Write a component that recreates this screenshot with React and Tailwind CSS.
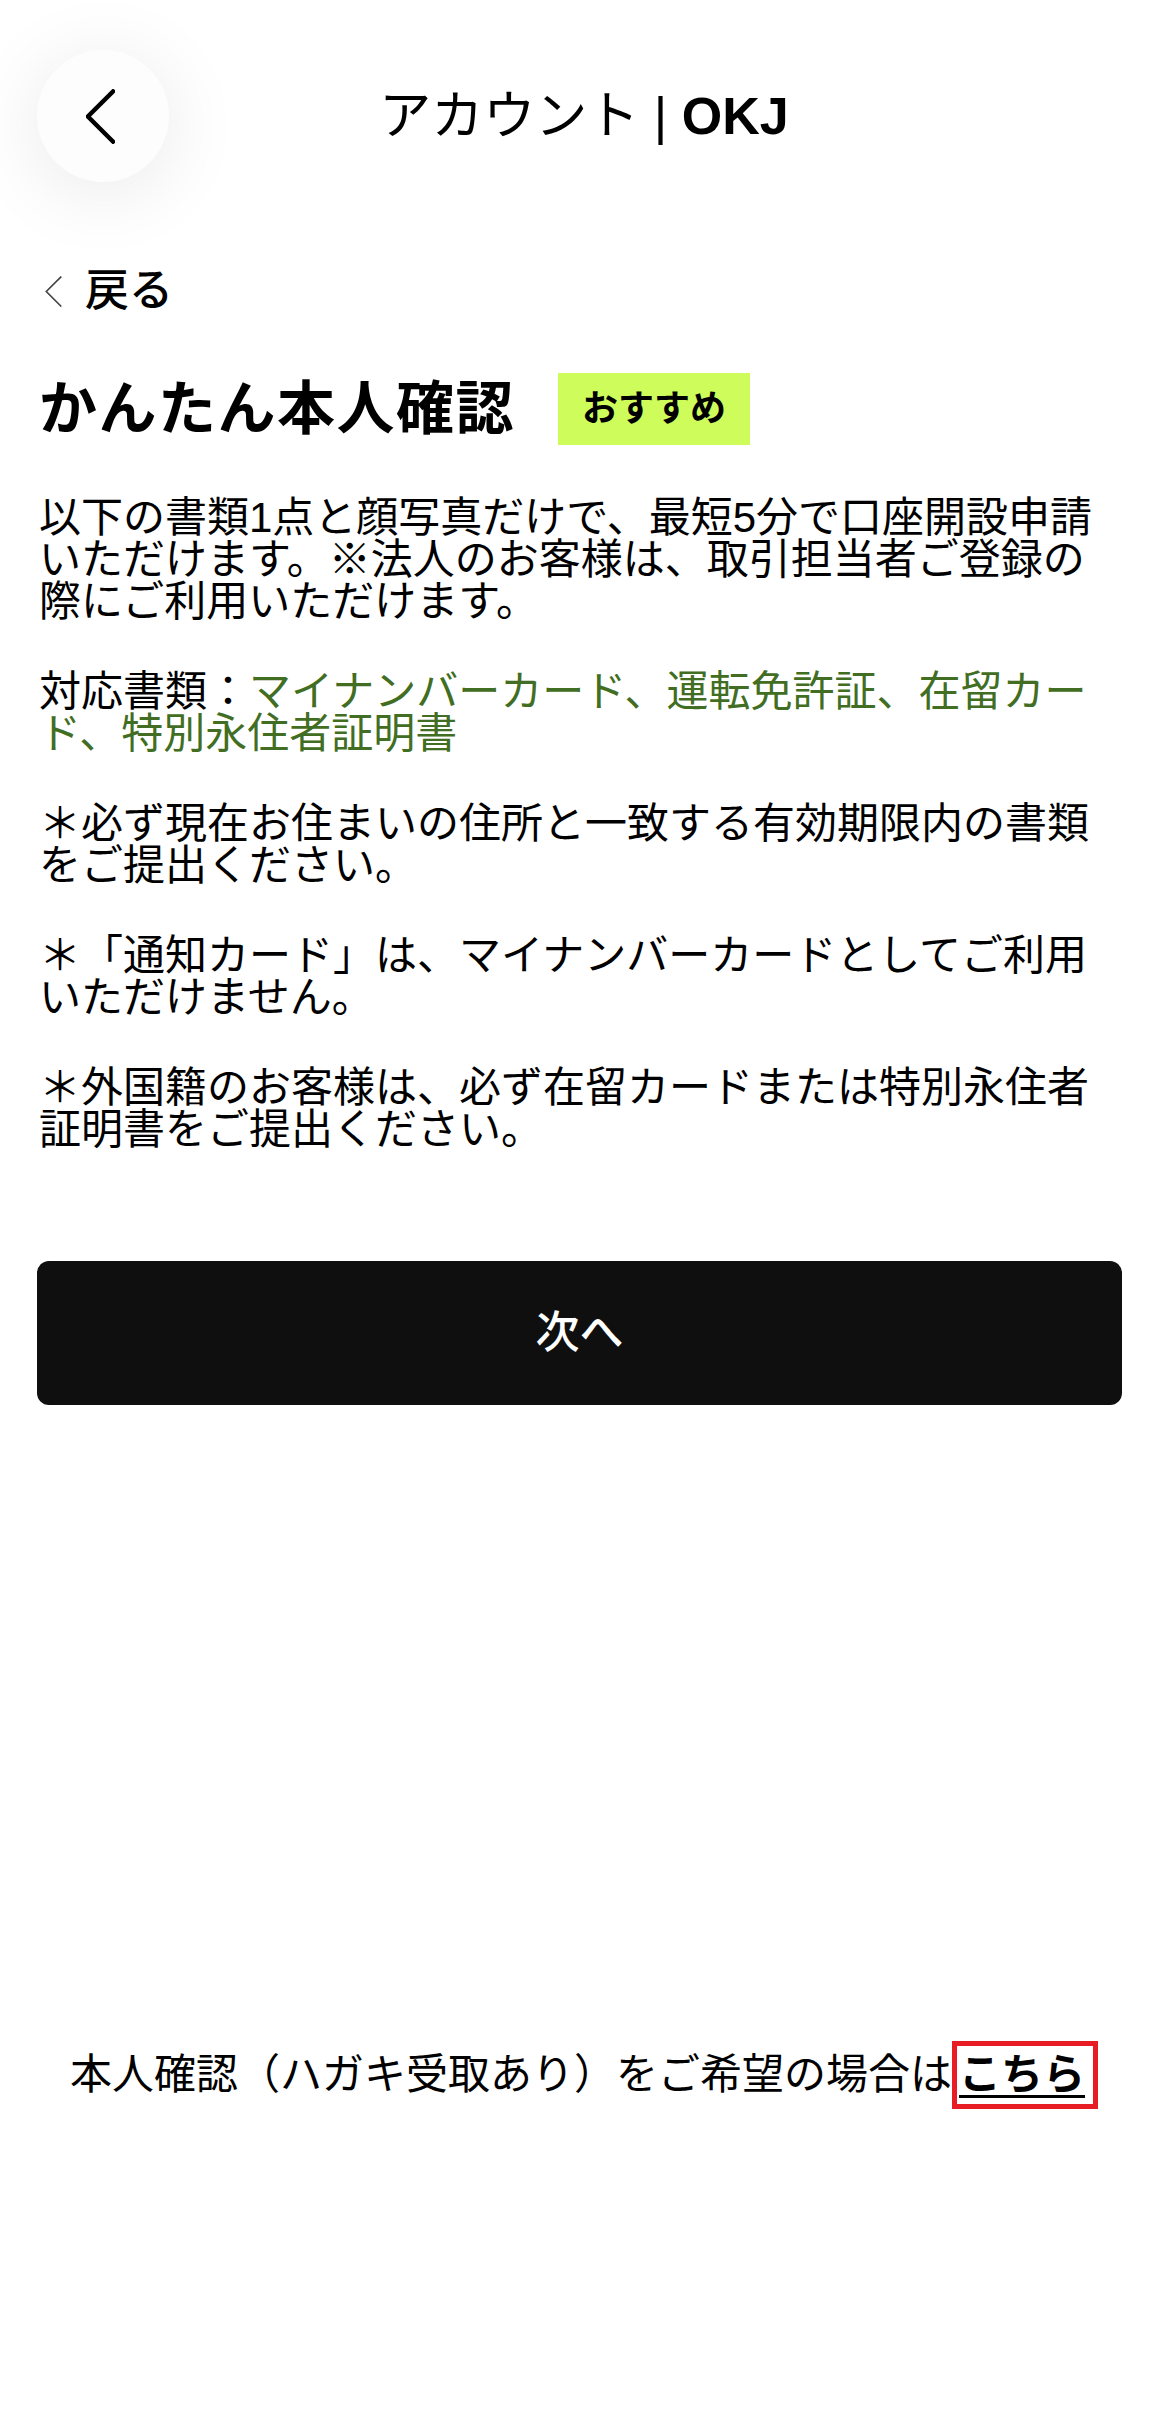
import React from "react";

const FONT = { fontFamily: '"Liberation Sans", "Noto Sans CJK JP", sans-serif' };

function ChevronLeft({ className, strokeWidth = 4.5 }) {
  return (
    <svg viewBox="0 0 30 56" className={className} fill="none">
      <polyline points="28,2 2,28 28,54" stroke="currentColor" strokeWidth={strokeWidth} strokeLinecap="square" />
    </svg>
  );
}

export default function App() {
  return (
    <div className="min-h-[2429px] bg-white text-black" style={FONT}>
      {/* header */}
      <div className="grid grid-cols-[1fr_auto_1fr] items-center pt-[50px] px-[37px]">
        <div>
          <button className="w-[132px] h-[132px] rounded-full bg-[#fdfdfd] shadow-[0_10px_80px_rgba(0,0,0,0.09)] flex items-center justify-center">
            <ChevronLeft className="w-[29px] h-[55px] mr-[6px] text-black" />
          </button>
        </div>
        <h1 className="text-[52px] leading-none font-normal">
          アカウント | <span className="font-bold">OKJ</span>
        </h1>
        <div />
      </div>

      {/* back link */}
      <div className="flex items-center mt-[87px] pl-[45px]">
        <ChevronLeft className="w-[17px] h-[31px] text-[#444]" strokeWidth={3} />
        <span className="ml-[23px] text-[44px] leading-[44px] font-medium">戻る</span>
      </div>

      {/* title */}
      <div className="flex items-center mt-[60px] pl-[39px] h-[72px]">
        <h2 className="text-[58px] leading-none font-bold tracking-[1.5px]">かんたん本人確認</h2>
        <span className="ml-[43px] h-[72px] px-[24px] flex items-center bg-[#cdfc5b] text-[36px] font-bold">
          おすすめ
        </span>
      </div>

      {/* body */}
      <div className="mt-[52px] pl-[39px] pr-[49px] text-[42px] leading-[42px] space-y-[48px]">
        <p>以下の書類1点と顔写真だけで、最短5分で口座開設申請いただけます。※法人のお客様は、取引担当者ご登録の際にご利用いただけます。</p>
        <p>
          対応書類：<span className="text-[#416e22]">マイナンバーカード、運転免許証、在留カード、特別永住者証明書</span>
        </p>
        <p>＊必ず現在お住まいの住所と一致する有効期限内の書類をご提出ください。</p>
        <p>＊「通知カード」は、マイナンバーカードとしてご利用いただけません。</p>
        <p>＊外国籍のお客様は、必ず在留カードまたは特別永住者証明書をご提出ください。</p>
      </div>

      {/* next button */}
      <div className="mt-[110px] pl-[37px] pr-[46px]">
        <button className="w-full h-[144px] rounded-[12px] bg-[#0f0f0f] text-white text-[44px] font-medium">
          次へ
        </button>
      </div>

      {/* alternative */}
      <div className="mt-[636px] flex justify-center items-center text-[42px] leading-none">
        <span>本人確認（ハガキ受取あり）をご希望の場合は</span>
        <span className="border-[5px] border-[#e81c24] pl-[2px] pr-[8px] h-[68px] flex items-center">
          <span className="font-bold underline decoration-[3px] underline-offset-[6px]">こちら</span>
        </span>
      </div>
    </div>
  );
}
